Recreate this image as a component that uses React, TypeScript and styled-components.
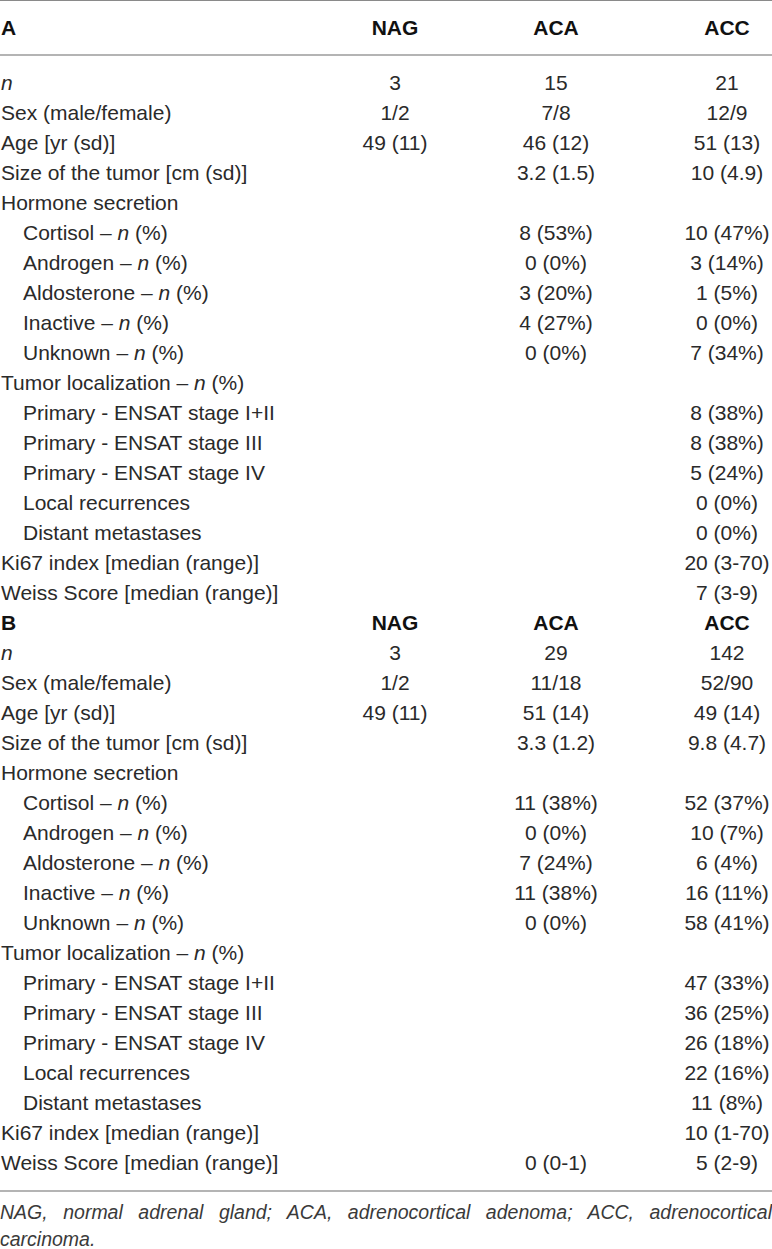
import React from 'react'
import styled, { createGlobalStyle } from 'styled-components'

type Line = {
    label: React.ReactNode
    indent?: boolean
    nag?: string
    aca?: string
    acc?: string
}

const N = () => <Em>n</Em>
const pct = (name: string) => (
    <>
        {name} – <N /> (%)
    </>
)

const sectionA: Line[] = [
    { label: <N />, nag: '3', aca: '15', acc: '21' },
    { label: 'Sex (male/female)', nag: '1/2', aca: '7/8', acc: '12/9' },
    { label: 'Age [yr (sd)]', nag: '49 (11)', aca: '46 (12)', acc: '51 (13)' },
    { label: 'Size of the tumor [cm (sd)]', aca: '3.2 (1.5)', acc: '10 (4.9)' },
    { label: 'Hormone secretion' },
    { label: pct('Cortisol'), indent: true, aca: '8 (53%)', acc: '10 (47%)' },
    { label: pct('Androgen'), indent: true, aca: '0 (0%)', acc: '3 (14%)' },
    { label: pct('Aldosterone'), indent: true, aca: '3 (20%)', acc: '1 (5%)' },
    { label: pct('Inactive'), indent: true, aca: '4 (27%)', acc: '0 (0%)' },
    { label: pct('Unknown'), indent: true, aca: '0 (0%)', acc: '7 (34%)' },
    { label: pct('Tumor localization') },
    { label: 'Primary - ENSAT stage I+II', indent: true, acc: '8 (38%)' },
    { label: 'Primary - ENSAT stage III', indent: true, acc: '8 (38%)' },
    { label: 'Primary - ENSAT stage IV', indent: true, acc: '5 (24%)' },
    { label: 'Local recurrences', indent: true, acc: '0 (0%)' },
    { label: 'Distant metastases', indent: true, acc: '0 (0%)' },
    { label: 'Ki67 index [median (range)]', acc: '20 (3-70)' },
    { label: 'Weiss Score [median (range)]', acc: '7 (3-9)' }
]

const sectionB: Line[] = [
    { label: <N />, nag: '3', aca: '29', acc: '142' },
    { label: 'Sex (male/female)', nag: '1/2', aca: '11/18', acc: '52/90' },
    { label: 'Age [yr (sd)]', nag: '49 (11)', aca: '51 (14)', acc: '49 (14)' },
    { label: 'Size of the tumor [cm (sd)]', aca: '3.3 (1.2)', acc: '9.8 (4.7)' },
    { label: 'Hormone secretion' },
    { label: pct('Cortisol'), indent: true, aca: '11 (38%)', acc: '52 (37%)' },
    { label: pct('Androgen'), indent: true, aca: '0 (0%)', acc: '10 (7%)' },
    { label: pct('Aldosterone'), indent: true, aca: '7 (24%)', acc: '6 (4%)' },
    { label: pct('Inactive'), indent: true, aca: '11 (38%)', acc: '16 (11%)' },
    { label: pct('Unknown'), indent: true, aca: '0 (0%)', acc: '58 (41%)' },
    { label: pct('Tumor localization') },
    { label: 'Primary - ENSAT stage I+II', indent: true, acc: '47 (33%)' },
    { label: 'Primary - ENSAT stage III', indent: true, acc: '36 (25%)' },
    { label: 'Primary - ENSAT stage IV', indent: true, acc: '26 (18%)' },
    { label: 'Local recurrences', indent: true, acc: '22 (16%)' },
    { label: 'Distant metastases', indent: true, acc: '11 (8%)' },
    { label: 'Ki67 index [median (range)]', acc: '10 (1-70)' },
    { label: 'Weiss Score [median (range)]', aca: '0 (0-1)', acc: '5 (2-9)' }
]

const HeadRow = ({ name }: { name: string }) => (
    <Row bold>
        <Label>{name}</Label>
        <Cell>NAG</Cell>
        <Cell>ACA</Cell>
        <Cell>ACC</Cell>
    </Row>
)

const DataRows = ({ lines }: { lines: Line[] }) => (
    <>
        {lines.map((line, idx) => (
            <Row key={idx}>
                <Label indent={line.indent}>{line.label}</Label>
                <Cell>{line.nag}</Cell>
                <Cell>{line.aca}</Cell>
                <Cell>{line.acc}</Cell>
            </Row>
        ))}
    </>
)

const App: React.FC = () => {
    return (
        <>
            <GlobalStyle />
            <Page>
                <Table>
                    <Head>
                        <HeadRow name="A" />
                    </Head>
                    <Body>
                        <DataRows lines={sectionA} />
                        <HeadRow name="B" />
                        <DataRows lines={sectionB} />
                    </Body>
                </Table>
                <Footnote>
                    NAG, normal adrenal gland; ACA, adrenocortical adenoma; ACC,
                    adrenocortical carcinoma.
                </Footnote>
            </Page>
        </>
    )
}

export default App

const GlobalStyle = createGlobalStyle`
    html, body {
        margin: 0;
        padding: 0;
        background: #ffffff;
    }
    body {
        font-family: "Liberation Sans", Arial, sans-serif;
        color: #222222;
    }
`

const Page = styled.div`
    width: 772px;
`

const Table = styled.div`
    border-top: 1px solid #8a8a8a;
    border-bottom: 2px solid #b4b4b4;
    padding-bottom: 12px;
`

const Head = styled.div`
    padding: 12px 0 11px;
    border-bottom: 2px solid #b4b4b4;
`

const Body = styled.div`
    padding-top: 12px;
`

const Row = styled.div<{ bold?: boolean }>`
    display: grid;
    grid-template-columns: 360px 70px 252px 90px;
    height: 30px;
    align-items: center;
    font-size: 21px;
    line-height: 30px;
    font-weight: ${(p) => (p.bold ? 700 : 400)};
    color: ${(p) => (p.bold ? '#111111' : '#2a2a2a')};
`

const Label = styled.div<{ indent?: boolean }>`
    padding-left: ${(p) => (p.indent ? 23 : 1)}px;
    white-space: nowrap;
`

const Cell = styled.div`
    display: flex;
    justify-content: center;
    white-space: nowrap;
`

const Em = styled.span`
    font-style: italic;
`

const Footnote = styled.p`
    margin: 7px 0 0;
    font-size: 19.5px;
    line-height: 27px;
    font-style: italic;
    text-align: justify;
    color: #3a3a3a;
`
